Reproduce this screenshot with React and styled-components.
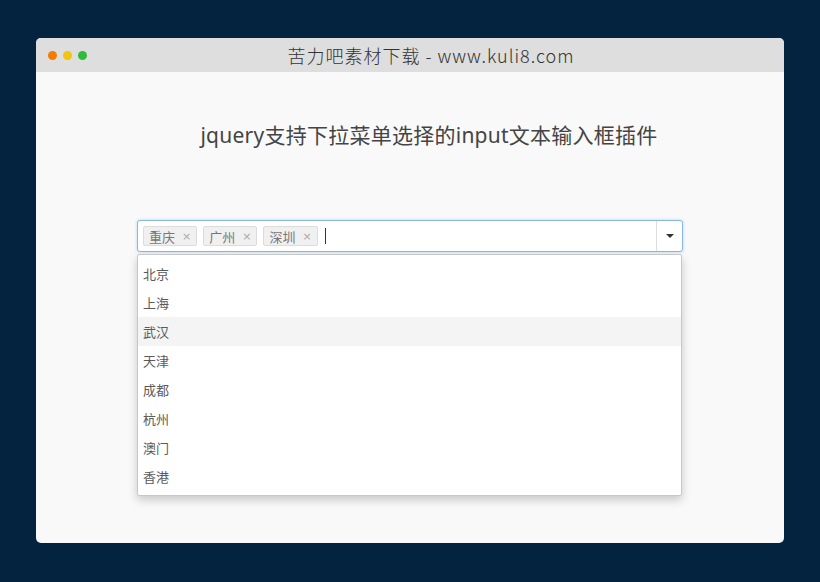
import React from 'react';
import styled, { createGlobalStyle } from 'styled-components';

const Global = createGlobalStyle`
  html, body {
    margin: 0;
    padding: 0;
    background: #03233f;
    font-family: "Open Sans", "Noto Sans CJK SC", sans-serif;
  }
`;

const Page = styled.div`
  width: 820px;
  height: 582px;
  box-sizing: border-box;
  padding: 38px 36px 39px;
`;

const Window = styled.div`
  height: 100%;
  background: #f9f9f9;
  border-radius: 5px;
  overflow: hidden;
  display: flex;
  flex-direction: column;
`;

const TitleBar = styled.div`
  height: 34px;
  flex: none;
  background: #dedede;
  position: relative;
  display: flex;
  align-items: center;
  justify-content: center;
`;

const Dots = styled.div`
  position: absolute;
  left: 12px;
  top: 13px;
  display: flex;
  gap: 6px;
`;

const Dot = styled.span`
  width: 9px;
  height: 9px;
  border-radius: 50%;
  background: ${p => p.color};
`;

const Title = styled.div`
  font-family: "Noto Sans CJK SC", sans-serif;
  font-weight: 300;
  font-size: 18px;
  color: #333;
  letter-spacing: 1px;
  margin-left: 42px;
`;

const Body = styled.div`
  flex: 1;
  padding-top: 48px;
`;

const Heading = styled.h1`
  margin: 0;
  text-align: center;
  font-weight: normal;
  font-size: 21px;
  line-height: 30px;
  letter-spacing: 0.25px;
  color: #444;
  font-family: "Noto Sans", "Noto Sans CJK SC", sans-serif;
  padding-left: 38px;
`;

const Combo = styled.div`
  width: 546px;
  margin: 70px auto 0;
  position: relative;
`;

const InputBox = styled.div`
  height: 32px;
  box-sizing: border-box;
  background: #fff;
  border: 1px solid #8ab8e6;
  border-radius: 3px;
  box-shadow: 0 0 3px rgba(102, 175, 233, 0.5);
  display: flex;
  align-items: center;
`;

const Tags = styled.div`
  flex: 1;
  display: flex;
  align-items: center;
  gap: 6px;
  padding-left: 5px;
`;

const Tag = styled.span`
  height: 20px;
  box-sizing: border-box;
  padding: 0 5px;
  display: flex;
  align-items: center;
  gap: 7px;
  background: #f0f0f0;
  border: 1px solid #dcdcdc;
  border-radius: 2px;
  font-size: 13px;
  color: #777;
  font-family: "Noto Sans CJK SC", sans-serif;
`;

const Remove = styled.span`
  font-size: 11px;
  color: #aaa;
  font-family: "DejaVu Sans", sans-serif;
`;

const Caret = styled.span`
  width: 1px;
  height: 16px;
  background: #333;
  margin-left: 1px;
`;

const ArrowButton = styled.div`
  width: 25px;
  height: 100%;
  border-left: 1px solid #ddd;
  display: flex;
  align-items: center;
  justify-content: center;
`;

const Arrow = styled.span`
  width: 0;
  height: 0;
  border-left: 4px solid transparent;
  border-right: 4px solid transparent;
  border-top: 4px solid #333;
`;

const Menu = styled.ul`
  list-style: none;
  margin: 2px 1px 0 0;
  padding: 4px 0;
  background: #fff;
  border: 1px solid #c8c8c8;
  border-radius: 2px;
  box-shadow: 0 4px 10px rgba(0, 0, 0, 0.2);
`;

const Item = styled.li`
  height: 29px;
  line-height: 29px;
  padding-left: 5px;
  font-size: 13px;
  color: #5a5a5a;
  font-family: "Noto Sans CJK SC", sans-serif;
  background: ${p => (p.active ? '#f4f4f4' : 'transparent')};
`;

const selected = ['重庆', '广州', '深圳'];
const cities = ['北京', '上海', '武汉', '天津', '成都', '杭州', '澳门', '香港'];

export default function App() {
  return (
    <>
      <Global />
      <Page>
        <Window>
          <TitleBar>
            <Dots>
              <Dot color="#f57c00" />
              <Dot color="#f1c40f" />
              <Dot color="#2ebd3a" />
            </Dots>
            <Title>苦力吧素材下载 - www.kuli8.com</Title>
          </TitleBar>
          <Body>
            <Heading>jquery支持下拉菜单选择的input文本输入框插件</Heading>
            <Combo>
              <InputBox>
                <Tags>
                  {selected.map(s => (
                    <Tag key={s}>
                      {s}
                      <Remove>×</Remove>
                    </Tag>
                  ))}
                  <Caret />
                </Tags>
                <ArrowButton>
                  <Arrow />
                </ArrowButton>
              </InputBox>
              <Menu>
                {cities.map(c => (
                  <Item key={c} active={c === '武汉'}>{c}</Item>
                ))}
              </Menu>
            </Combo>
          </Body>
        </Window>
      </Page>
    </>
  );
}
